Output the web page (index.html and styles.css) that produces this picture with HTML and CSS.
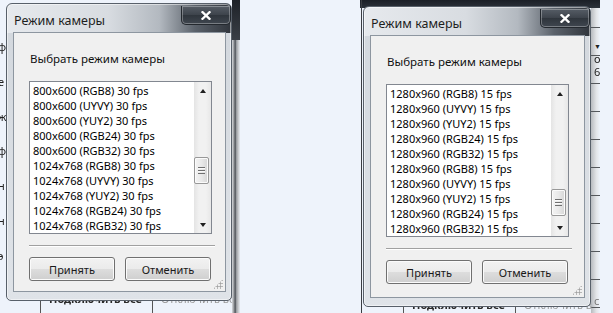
FILE: index.html
```html
<!DOCTYPE html>
<html lang="ru">
<head>
    <meta charset="UTF-8">
    <title>Режим камеры</title>
    <link rel="stylesheet" href="styles.css">
</head>
<body>
    <div class="desk">
        <div class="shot shot-left">
            <div class="app-side">
                <span>ф</span><span>е</span><span>ж</span><span>ф</span><span>н</span><span>н</span><span>э</span>
            </div>
            <div class="app-main">
                <div class="app-row">
                    <span class="app-btn">Подключить все</span>
                    <span class="app-btn faint">Отключить все</span>
                </div>
            </div>
            <div class="app-scroll"></div>

            <div class="dialog">
                <div class="titlebar">
                    <span class="title">Режим камеры</span>
                    <button class="close" type="button">
                        <svg width="10" height="9" viewBox="0 0 10 9"><path d="M1.5 1.2 L8.5 7.8 M8.5 1.2 L1.5 7.8" stroke="#fff" stroke-width="2.3" stroke-linecap="square"/></svg>
                    </button>
                </div>
                <div class="panel">
                    <p class="caption">Выбрать режим камеры</p>
                    <div class="listbox">
                        <ul class="items">
                            <li>800x600 (RGB8) 30 fps</li>
                            <li>800x600 (UYVY) 30 fps</li>
                            <li>800x600 (YUY2) 30 fps</li>
                            <li>800x600 (RGB24) 30 fps</li>
                            <li>800x600 (RGB32) 30 fps</li>
                            <li>1024x768 (RGB8) 30 fps</li>
                            <li>1024x768 (UYVY) 30 fps</li>
                            <li>1024x768 (YUY2) 30 fps</li>
                            <li>1024x768 (RGB24) 30 fps</li>
                            <li>1024x768 (RGB32) 30 fps</li>
                        </ul>
                        <div class="scrollbar">
                            <span class="arrow arrow-up"></span>
                            <div class="track">
                                <div class="thumb" style="margin-top: 58px;"><span></span></div>
                            </div>
                            <span class="arrow arrow-down"></span>
                        </div>
                    </div>
                    <hr class="sep">
                    <div class="buttons">
                        <button class="btn" type="button">Принять</button>
                        <button class="btn" type="button">Отменить</button>
                    </div>
                    <span class="grip"></span>
                </div>
            </div>
        </div>

        <div class="shot shot-right">
            <div class="app-side app-side-thin"></div>
            <div class="app-main">
                <div class="app-row app-row-right">
                    <span class="app-btn">Подключить все</span>
                    <span class="app-btn faint">Отключить все</span>
                </div>
            </div>
            <div class="app-col">
                <span class="drop">▼</span>
                <span class="frag">о</span>
                <span class="frag">6</span>
                <span class="frag frag-end">c</span>
            </div>

            <div class="dialog dialog-wide">
                <div class="titlebar">
                    <span class="title">Режим камеры</span>
                    <button class="close" type="button">
                        <svg width="10" height="9" viewBox="0 0 10 9"><path d="M1.5 1.2 L8.5 7.8 M8.5 1.2 L1.5 7.8" stroke="#fff" stroke-width="2.3" stroke-linecap="square"/></svg>
                    </button>
                </div>
                <div class="panel">
                    <p class="caption">Выбрать режим камеры</p>
                    <div class="listbox">
                        <ul class="items">
                            <li>1280x960 (RGB8) 15 fps</li>
                            <li>1280x960 (UYVY) 15 fps</li>
                            <li>1280x960 (YUY2) 15 fps</li>
                            <li>1280x960 (RGB24) 15 fps</li>
                            <li>1280x960 (RGB32) 15 fps</li>
                            <li>1280x960 (RGB8) 15 fps</li>
                            <li>1280x960 (UYVY) 15 fps</li>
                            <li>1280x960 (YUY2) 15 fps</li>
                            <li>1280x960 (RGB24) 15 fps</li>
                            <li>1280x960 (RGB32) 15 fps</li>
                        </ul>
                        <div class="scrollbar">
                            <span class="arrow arrow-up"></span>
                            <div class="track">
                                <div class="thumb" style="margin-top: 87px;"><span></span></div>
                            </div>
                            <span class="arrow arrow-down"></span>
                        </div>
                    </div>
                    <hr class="sep">
                    <div class="buttons">
                        <button class="btn" type="button">Принять</button>
                        <button class="btn" type="button">Отменить</button>
                    </div>
                    <span class="grip"></span>
                </div>
            </div>
        </div>
    </div>
</body>
</html>
```

FILE: styles.css
```css
* {
    box-sizing: border-box;
}
body {
    margin: 0;
    width: 613px;
    height: 313px;
    overflow: hidden;
    background-color: #eef3fb;
    font-family: "Noto Sans", "Open Sans", sans-serif;
    font-size: 11px;
    color: #111;
}
.desk {
    display: flex;
    height: 313px;
}

/* the two screenshots, each with bits of the app behind the dialog */
.shot {
    position: relative;
    display: flex;
    flex-shrink: 0;
    height: 313px;
}
.shot-left {
    width: 240px;
}
.shot-right {
    width: 240px;
    margin-left: 120px;
    background: linear-gradient(#1b1f26, #2c323a) top / 100% 8px no-repeat;
}
.app-side {
    width: 6px;
    flex-shrink: 0;
    display: flex;
    flex-direction: column;
    justify-content: space-around;
    padding: 30px 0 40px;
    overflow: hidden;
    font-size: 11px;
    line-height: 12px;
    color: #222;
    filter: blur(0.4px);
}
.app-side span {
    margin-left: -2px;
}
.app-side-thin {
    width: 3px;
    padding: 0;
    background: linear-gradient(90deg, transparent 1px, #3a3d42 1px, #3a3d42 2px, transparent 2px);
}
.app-main {
    flex: 1;
    min-width: 0;
    overflow: hidden;
    display: flex;
    flex-direction: column;
    justify-content: flex-end;
}
.app-row {
    display: flex;
    height: 22px;
    padding-left: 34px;
    line-height: 16px;
}
.app-row-right {
    padding-left: 40px;
    height: 16px;
}
.app-btn {
    flex-shrink: 0;
    width: 112px;
    padding-left: 8px;
    border-left: 1px solid #555;
    font-weight: bold;
    white-space: nowrap;
    overflow: hidden;
    color: #2a2a2a;
    filter: blur(0.7px);
}
.app-btn.faint {
    font-weight: normal;
    color: #999;
}
.app-scroll {
    width: 8px;
    flex-shrink: 0;
    background:
        linear-gradient(#1e2228, #3a3f46) top / 100% 40px no-repeat,
        linear-gradient(90deg, #d8dadd 0, #8f9296 25%, #4d5156 40%, #9a9da1 55%, #c9cbce 80%, #e6ebf2 100%);
}
.app-col {
    width: 9px;
    flex-shrink: 0;
    margin-left: -1px;
    display: flex;
    flex-direction: column;
    padding-top: 42px;
    overflow: hidden;
    font-size: 11px;
    line-height: 13px;
    color: #222;
    background:
        linear-gradient(#1b1f26, #2c323a) top / 100% 8px no-repeat,
        repeating-linear-gradient(transparent 0 27px, #55585c 27px 28px),
        linear-gradient(90deg, #b8bbbf, #e3e5e8 60%, #eef3fb);
}
.app-col span {
    padding-left: 3px;
}
.drop {
    font-size: 7px;
    line-height: 10px;
}
.frag {
    filter: blur(0.3px);
}
.frag-end {
    margin-top: auto;
    padding-bottom: 6px;
    color: #777;
}

/* dialog window */
.dialog {
    position: absolute;
    left: 6px;
    top: 3px;
    width: 226px;
    height: 298px;
    display: flex;
    flex-direction: column;
    padding: 0 5px 8px 6px;
    border: 1px solid #58606a;
    border-radius: 6px 6px 5px 5px;
    background:
        linear-gradient(90deg, #e6e9ed 0%, #d8dce1 45%, #b3b9c0 68%, #5b626b 84%, #30353c 100%) top / 100% 29px no-repeat,
        linear-gradient(#d2d7dd, #dfe3e8);
    box-shadow: inset 0 0 0 1px rgba(255, 255, 255, 0.5);
}
.dialog-wide {
    left: 3px;
    top: 6px;
    width: 228px;
    height: 301px;
}
.titlebar {
    position: relative;
    height: 28px;
    padding: 9px 0 0 1px;
}
.title {
    font-size: 12.5px;
    line-height: 16px;
    color: #1e1e1e;
}
.close {
    position: absolute;
    top: 2px;
    right: -5px;
    width: 50px;
    height: 19px;
    padding: 0;
    display: flex;
    align-items: center;
    justify-content: center;
    border: 1px solid #23282e;
    border-top: none;
    border-radius: 0 0 5px 5px;
    background: linear-gradient(#565d66, #3d434b 50%, #2f353c 51%, #3f464f);
    box-shadow: inset 0 0 0 1px rgba(255, 255, 255, 0.3);
}
.panel {
    position: relative;
    flex: 1;
    display: flex;
    flex-direction: column;
    align-items: flex-start;
    padding: 18px 10px 0 15px;
    background-color: #f0f0f0;
    border: 1px solid #8d96a0;
}
.caption {
    margin: 0 0 0 1px;
    font-size: 11.5px;
    line-height: 16px;
}

/* list box */
.listbox {
    display: flex;
    width: 183px;
    height: 153px;
    margin-top: 14px;
    border: 1px solid #828790;
    background-color: #fff;
}
.items {
    flex: 1;
    margin: 0;
    padding: 1px 0 0 3px;
    list-style: none;
    font-size: 11px;
    line-height: 15px;
    white-space: nowrap;
    overflow: hidden;
    color: #000;
}
.scrollbar {
    width: 17px;
    display: flex;
    flex-direction: column;
    background: linear-gradient(90deg, #e4e4e4, #f1f1f1 30%, #f1f1f1 70%, #e7e7e7);
}
.arrow {
    height: 17px;
    display: flex;
    align-items: center;
    justify-content: center;
}
.arrow::before {
    content: "";
    border-left: 3.5px solid transparent;
    border-right: 3.5px solid transparent;
}
.arrow-up::before {
    border-bottom: 4px solid #202020;
}
.arrow-down::before {
    border-top: 4px solid #202020;
}
.track {
    flex: 1;
}
.thumb {
    width: 15px;
    height: 27px;
    display: flex;
    align-items: center;
    justify-content: center;
    border: 1px solid #989898;
    border-radius: 2px;
    background: linear-gradient(90deg, #f4f4f4, #e9e9e9 50%, #d6d6d6);
    box-shadow: inset 0 0 0 1px #fbfbfb;
}
.thumb span {
    width: 7px;
    height: 7px;
    background: repeating-linear-gradient(#6f6f6f 0 1px, #fafafa 1px 2px, transparent 2px 3px);
}

.sep {
    width: 186px;
    margin: 11px 0 0;
    border: none;
    border-top: 1px solid #a0a0a0;
    border-bottom: 1px solid #fff;
}
.buttons {
    display: flex;
    gap: 10px;
    margin-top: 10px;
}
.btn {
    width: 86px;
    height: 24px;
    padding: 0;
    border: 1px solid #707070;
    border-radius: 3px;
    background: linear-gradient(#f2f2f2 0%, #ebebeb 50%, #dddddd 51%, #cfcfcf 100%);
    box-shadow: inset 0 0 0 1px #fbfbfb;
    font-family: inherit;
    font-size: 11px;
    color: #1a1a1a;
}
.grip {
    position: absolute;
    right: 2px;
    bottom: 2px;
    width: 10px;
    height: 10px;
    background: radial-gradient(circle, #a3a3a3 0.9px, transparent 1.3px) 0 0 / 3px 3px;
    clip-path: polygon(100% 0, 100% 100%, 0 100%);
}
```
